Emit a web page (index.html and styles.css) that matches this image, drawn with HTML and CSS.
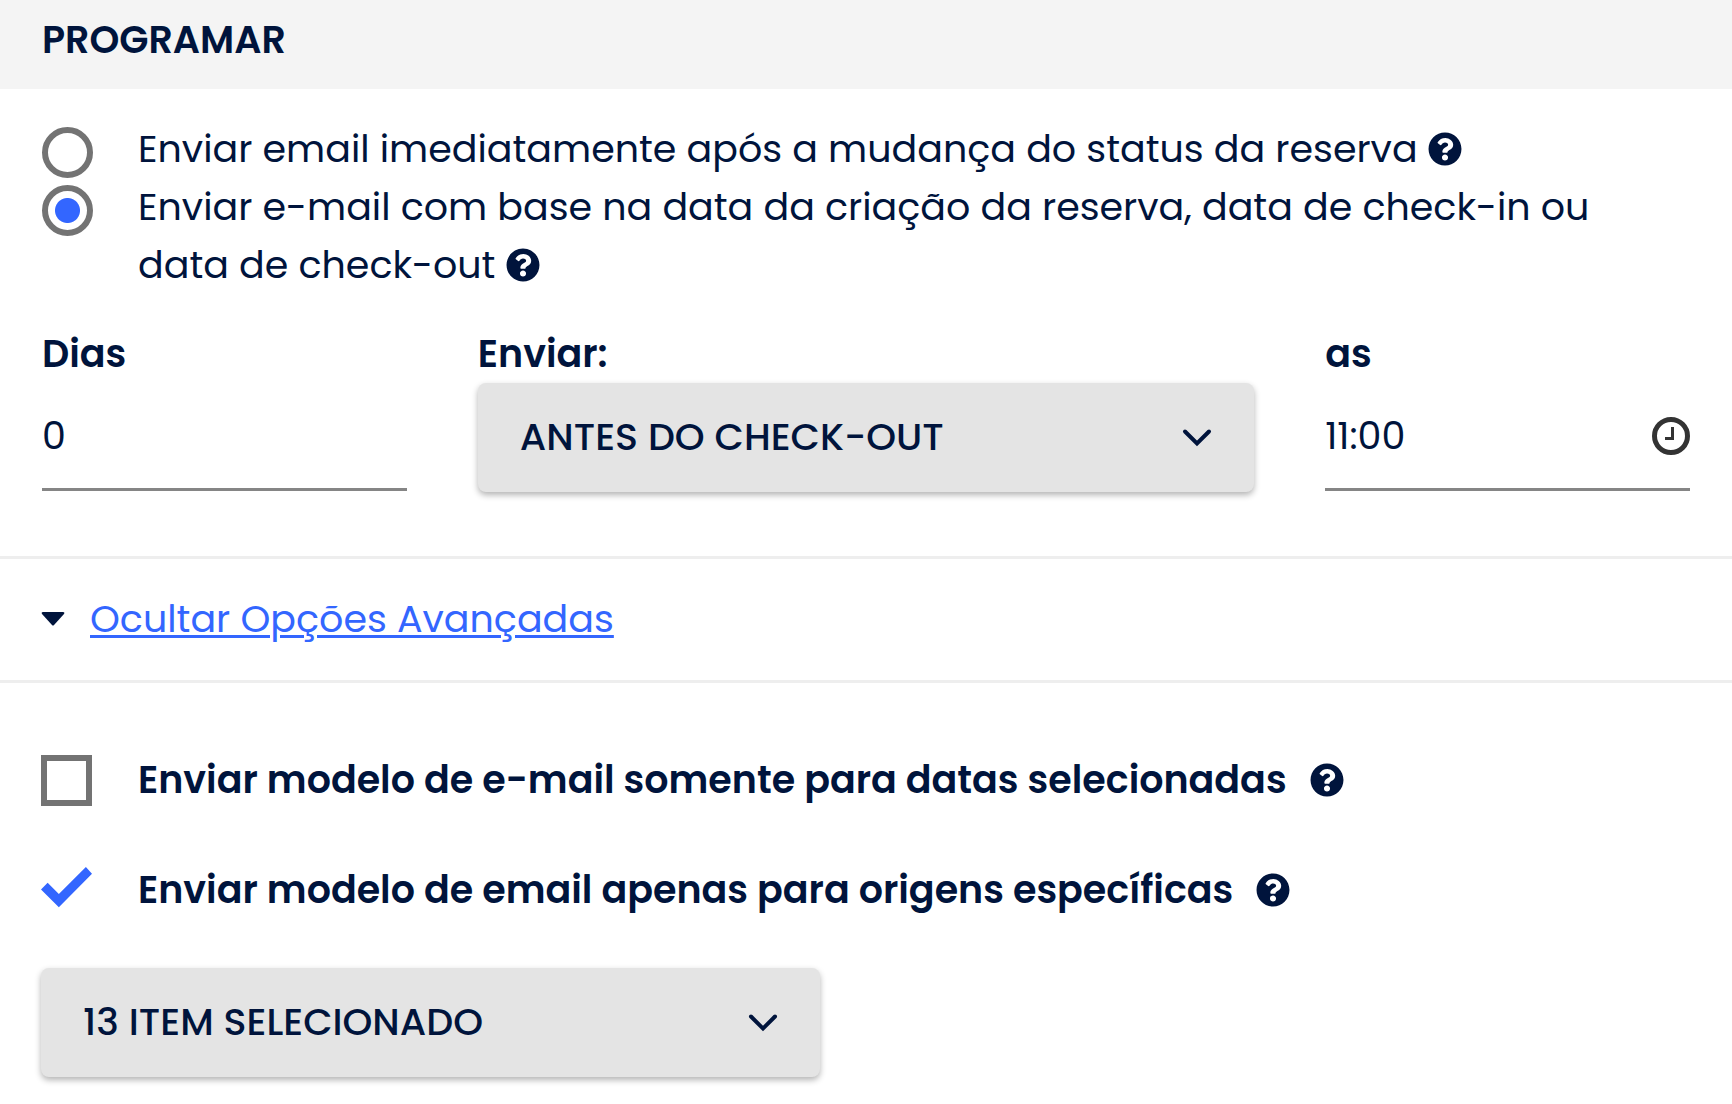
FILE: index.html
```html
<!DOCTYPE html>
<html lang="pt">
<head>
<meta charset="utf-8">
<meta name="viewport" content="width=device-width, initial-scale=1">
<title>Programar</title>
<link rel="stylesheet" href="styles.css">
</head>
<body>
<svg class="sprite" aria-hidden="true">
  <symbol id="help" viewBox="0 0 512 512"><path fill="currentColor" d="M504 256c0 136.997-111.043 248-248 248S8 392.997 8 256C8 119.083 119.043 8 256 8s248 111.083 248 248zM262.655 90c-54.497 0-89.255 22.957-116.549 63.758-3.536 5.286-2.353 12.415 2.715 16.258l34.699 26.31c5.205 3.947 12.621 3.008 16.665-2.122 17.864-22.658 30.113-35.797 57.303-35.797 20.429 0 45.698 13.148 45.698 32.958 0 14.976-12.363 22.667-32.534 33.976C247.128 238.528 216 254.941 216 296v4c0 6.627 5.373 12 12 12h56c6.627 0 12-5.373 12-12v-1.333c0-28.462 83.186-29.647 83.186-106.667 0-58.002-60.165-102-116.531-102zM256 338c-25.365 0-46 20.635-46 46 0 25.364 20.635 46 46 46s46-20.636 46-46c0-25.365-20.635-46-46-46z"/></symbol>
  <symbol id="chevron" viewBox="0 0 30 20"><path fill="none" stroke="currentColor" stroke-width="4" stroke-linecap="round" d="M3 3.500 15 15.500 27 3.500"/></symbol>
</svg>
<main>
  <header class="panel-header"><h1>PROGRAMAR</h1></header>

  <section class="schedule">
    <div class="option">
      <input type="radio" name="when" id="now">
      <label for="now">Enviar email imediatamente após a mudança do status da reserva <svg class="help"><use href="#help"/></svg></label>
    </div>
    <div class="option">
      <input type="radio" name="when" id="based" checked>
      <label for="based">Enviar e-mail com base na data da criação da reserva, data de check-in ou data de check-out <svg class="help"><use href="#help"/></svg></label>
    </div>
    <div class="fields">
      <div class="field">
        <label for="days">Dias</label>
        <div class="line-input"><input type="text" id="days" value="0"></div>
      </div>
      <div class="field">
        <label for="send">Enviar:</label>
        <div class="select">
          <select id="send"><option>ANTES DO CHECK-OUT</option></select>
          <svg class="chevron"><use href="#chevron"/></svg>
        </div>
      </div>
      <div class="field">
        <label for="time">as</label>
        <div class="line-input">
          <input type="text" id="time" value="11:00">
          <svg class="clock" viewBox="0 0 38 38"><circle cx="19" cy="19" r="16.500" fill="none" stroke="#333" stroke-width="5"/><path d="M20.500 10v11.500H13" fill="none" stroke="#333" stroke-width="3"/></svg>
        </div>
      </div>
    </div>
  </section>

  <section class="toggle">
    <svg class="caret" viewBox="0 0 24 14"><path fill="currentColor" d="M2 0h20q2 0 1 2L13 13q-1 1-2 0L1 2Q0 0 2 0z"/></svg>
    <a href="#advanced">Ocultar Opções Avançadas</a>
  </section>

  <section class="advanced" id="advanced">
    <div class="check">
      <input type="checkbox" id="dates">
      <label for="dates">Enviar modelo de e-mail somente para datas selecionadas</label>
      <svg class="help"><use href="#help"/></svg>
    </div>
    <div class="check">
      <input type="checkbox" id="sources" checked>
      <label for="sources">Enviar modelo de email apenas para origens específicas</label>
      <svg class="help"><use href="#help"/></svg>
    </div>
    <div class="select sources">
      <select aria-label="Origens"><option>13 ITEM SELECIONADO</option></select>
      <svg class="chevron"><use href="#chevron"/></svg>
    </div>
  </section>
</main>
</body>
</html>
```
FILE: styles.css
```css
* { box-sizing: border-box; }

body {
  margin: 0;
  background: #fff;
  color: #00143c;
  font-family: Poppins, Inter, "Open Sans", sans-serif;
  font-size: 38px;
  line-height: 58px;
}

input, select {
  margin: 0;
  font: inherit;
  color: inherit;
}

svg { flex: none; }
.sprite { display: none; }

.panel-header {
  padding: 11px 42px 20px;
  background: #f4f4f4;
}

.panel-header h1 {
  margin: 0;
  font-size: 38px;
  font-weight: 600;
}

.schedule { padding: 31px 42px 64px; }

.option {
  display: flex;
  align-items: flex-start;
  gap: 45px;
}

input[type="radio"], input[type="checkbox"] {
  appearance: none;
  flex: none;
  width: 51px;
  height: 51px;
  border: 6px solid #737373;
}

input[type="radio"] {
  margin-top: 7px;
  border-radius: 50%;
}

input[type="radio"]:checked {
  background: radial-gradient(circle, #36f 12px, #fff 13px);
}

input[type="checkbox"]:checked {
  border: 0;
  background: #36f;
  clip-path: polygon(0 49%, 13% 36%, 35% 58%, 88% 5%, 100% 18%, 35% 84%);
}

.help {
  width: 34px;
  height: 34px;
}

.option .help { vertical-align: -4px; }

.fields {
  display: grid;
  grid-template-columns: minmax(0, 47fr) minmax(0, 100fr) minmax(0, 47fr);
  gap: 71px;
  margin-top: 31px;
}

.field > label {
  display: block;
  font-weight: 600;
}

.line-input {
  display: flex;
  align-items: center;
  height: 108px;
  border-bottom: 3px solid #858585;
}

.line-input input {
  flex: 1;
  min-width: 0;
  padding: 0;
  border: 0;
  background: none;
}

.clock {
  width: 38px;
  height: 38px;
}

.select {
  display: grid;
  align-items: center;
}

.select > * { grid-area: 1 / 1; }

.select select {
  appearance: none;
  width: 100%;
  height: 109px;
  padding: 0 90px 2px 42px;
  border: 0;
  border-radius: 8px;
  background: #e4e4e4;
  box-shadow: 0 3px 6px rgba(0, 0, 0, .3);
  font-weight: 500;
}

.chevron {
  justify-self: end;
  width: 30px;
  height: 20px;
  margin-right: 42px;
  pointer-events: none;
}

.toggle {
  display: flex;
  align-items: center;
  gap: 25px;
  padding: 31px 41px 32px;
  border-top: 3px solid #eee;
  border-bottom: 3px solid #eee;
}

.toggle a {
  color: #36f;
  text-decoration-thickness: 3px;
  text-underline-offset: 3px;
}

.caret {
  width: 24px;
  height: 14px;
}

.advanced { padding: 68px 41px 26px; }

.check {
  display: flex;
  align-items: center;
  margin-bottom: 52px;
  font-weight: 600;
}

.check label { margin: 0 23px 0 46px; }

.sources {
  max-width: 779px;
  margin-top: -3px;
}
```
